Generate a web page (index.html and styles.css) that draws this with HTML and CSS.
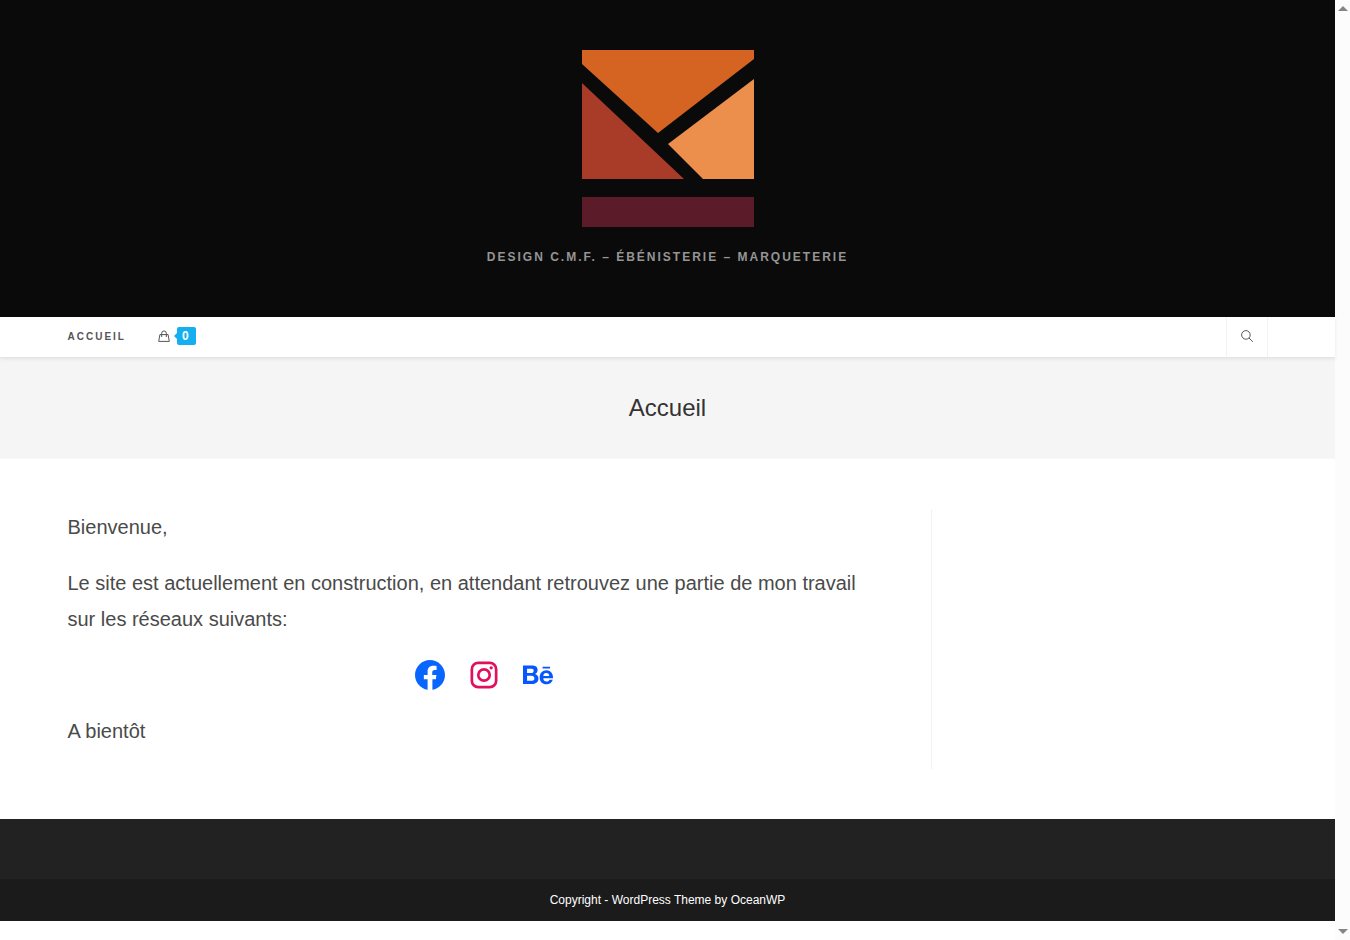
FILE: index.html
```html
<!DOCTYPE html>
<html lang="fr">

<head>
  <meta charset="UTF-8">
  <meta name="viewport" content="width=device-width, initial-scale=1.0">
  <title>Accueil</title>
  <link rel="stylesheet" href="styles.css">
</head>

<body>
  <div class="window">
    <div class="page">
      <header class="header">
        <a href="#" class="logo">
          <svg viewBox="0 0 172 177" role="img" aria-label="Logo">
            <path fill="#d56422" d="M0 0H172V9L76 83L0 14Z" />
            <path fill="#a83c29" d="M0 33L102 129H0Z" />
            <path fill="#ec8e4c" d="M172 29V129H121L86 94Z" />
            <path fill="#5c1b28" d="M0 147H172V177H0Z" />
          </svg>
        </a>
        <div class="tagline">Design C.M.F. – Ébénisterie – Marqueterie</div>
      </header>

      <nav class="nav">
        <div class="container nav-inner">
          <ul class="menu">
            <li><a href="#">Accueil</a></li>
            <li>
              <a href="#" class="cart" aria-label="Panier">
                <svg viewBox="0 0 12 12">
                  <path d="M1.900 4.600H10.100L11.300 11.400H.7ZM3.700 7V3.200A2.300 2.300 0 0 1 8.300 3.200V7" />
                </svg>
                <span class="count">0</span>
              </a>
            </li>
          </ul>
          <button type="button" class="search" aria-label="Rechercher">
            <svg viewBox="0 0 12 12">
              <circle cx="4.900" cy="4.900" r="4.300" />
              <path d="M8 8L11.800 11.800" />
            </svg>
          </button>
        </div>
      </nav>

      <div class="page-title">
        <h1>Accueil</h1>
      </div>

      <main class="container main">
        <article class="content">
          <p>Bienvenue,</p>
          <p>Le site est actuellement en construction, en attendant retrouvez une partie de mon travail sur les réseaux suivants:</p>
          <ul class="social">
            <li>
              <a href="#" class="facebook" aria-label="Facebook">
                <svg viewBox="0 0 24 24">
                  <path d="M12 2C6.5 2 2 6.5 2 12c0 5 3.7 9.1 8.4 9.9v-7H7.9V12h2.5V9.8c0-2.5 1.5-3.9 3.8-3.9 1.1 0 2.2.2 2.2.2v2.5h-1.3c-1.2 0-1.6.8-1.6 1.6V12h2.8l-.4 2.9h-2.3v7C18.3 21.1 22 17 22 12c0-5.500-4.500-10-10-10z" />
                </svg>
              </a>
            </li>
            <li>
              <a href="#" class="instagram" aria-label="Instagram">
                <svg viewBox="0 0 24 24">
                  <rect x="3.900" y="3.900" width="16.200" height="16.200" rx="4.200" />
                  <circle cx="12" cy="12" r="3.800" />
                  <circle class="dot" cx="16.800" cy="7.200" r="1.100" />
                </svg>
              </a>
            </li>
            <li>
              <a href="#" class="behance" aria-label="Behance">
                <svg viewBox="0 0 24 24">
                  <path d="M7.799,5.698c0.589,0,1.12,0.051,1.606,0.156c0.482,0.102,0.894,0.273,1.241,0.507c0.344,0.235,0.612,0.546,0.804,0.938c0.188,0.387,0.281,0.871,0.281,1.443c0,0.619-0.141,1.137-0.421,1.551c-0.284,0.413-0.7,0.751-1.255,1.014c0.756,0.218,1.317,0.601,1.689,1.146c0.374,0.549,0.557,1.205,0.557,1.975c0,0.623-0.12,1.161-0.359,1.612c-0.241,0.457-0.569,0.828-0.973,1.114c-0.408,0.288-0.876,0.5-1.399,0.637C9.052,17.931,8.514,18,7.963,18H2V5.698H7.799M7.449,10.668c0.481,0,0.878-0.114,1.192-0.345c0.311-0.228,0.463-0.603,0.463-1.119c0-0.286-0.051-0.523-0.152-0.707C8.848,8.315,8.711,8.171,8.536,8.07C8.362,7.966,8.166,7.894,7.94,7.854c-0.224-0.044-0.457-0.06-0.697-0.06H4.709v2.874H7.449zM7.6,15.905c0.267,0,0.521-0.024,0.759-0.077c0.243-0.053,0.457-0.137,0.637-0.261c0.182-0.12,0.332-0.283,0.441-0.491C9.547,14.87,9.6,14.602,9.6,14.278c0-0.633-0.18-1.084-0.533-1.357c-0.356-0.27-0.83-0.404-1.413-0.404H4.709v3.388L7.6,15.905zM16.162,15.864c0.367,0.358,0.897,0.538,1.583,0.538c0.493,0,0.92-0.125,1.277-0.374c0.354-0.248,0.571-0.514,0.654-0.79h2.155c-0.347,1.072-0.872,1.838-1.589,2.299C19.534,18,18.67,18.23,17.662,18.23c-0.701,0-1.332-0.113-1.899-0.337c-0.567-0.227-1.041-0.544-1.439-0.958c-0.389-0.415-0.689-0.907-0.904-1.484c-0.213-0.574-0.32-1.21-0.32-1.899c0-0.666,0.11-1.288,0.329-1.863c0.222-0.577,0.529-1.075,0.933-1.492c0.406-0.42,0.885-0.751,1.444-0.994c0.558-0.241,1.175-0.363,1.857-0.363c0.754,0,1.414,0.145,1.98,0.44c0.563,0.291,1.026,0.686,1.389,1.181c0.363,0.493,0.622,1.057,0.783,1.69c0.16,0.632,0.217,1.292,0.171,1.983h-6.428C15.557,14.84,15.795,15.506,16.162,15.864M18.973,11.184c-0.291-0.321-0.783-0.496-1.384-0.496c-0.39,0-0.714,0.066-0.973,0.2c-0.254,0.132-0.461,0.297-0.621,0.491c-0.157,0.197-0.265,0.405-0.328,0.628c-0.063,0.217-0.101,0.413-0.111,0.587h3.98C19.478,11.969,19.265,11.509,18.973,11.184zM15.057,7.738h4.985V6.524h-4.985V7.738z" />
                </svg>
              </a>
            </li>
          </ul>
          <p>A bientôt</p>
        </article>
      </main>

      <footer class="footer">
        <div class="footer-widgets"></div>
        <div class="copyright">Copyright - WordPress Theme by OceanWP</div>
      </footer>
    </div>

    <div class="scrollbar" aria-hidden="true">
      <svg viewBox="0 0 10 5"><path d="M0 5L5 0L10 5Z" /></svg>
      <svg viewBox="0 0 10 5"><path d="M0 0L5 5L10 0Z" /></svg>
    </div>
  </div>
</body>

</html>
```
FILE: styles.css
```css
* {
  box-sizing: border-box;
}

body {
  margin: 0;
  font-family: "Liberation Sans", Arial, sans-serif;
  color: #4a4a4a;
  background: #fff;
}

ul {
  list-style: none;
  margin: 0;
  padding: 0;
}

a {
  color: inherit;
  text-decoration: none;
}

svg {
  display: block;
}

.window {
  display: flex;
  min-height: 100vh;
}

.page {
  flex: 1;
  min-width: 0;
}

.container {
  width: 1200px;
  max-width: 90%;
  margin: 0 auto;
}

/* header */
.header {
  display: flex;
  flex-direction: column;
  align-items: center;
  gap: 20px;
  padding: 50px 20px;
  background: #0a0a0a;
}

.logo svg {
  width: 172px;
}

.tagline {
  font-size: 12px;
  font-weight: 600;
  line-height: 20px;
  letter-spacing: 2px;
  text-align: center;
  text-transform: uppercase;
  color: #959595;
}

/* navigation */
.nav {
  position: relative;
  background: #fff;
  border-bottom: 1px solid #e4e4e4;
  box-shadow: 0 1px 4px rgba(0, 0, 0, .08);
}

.nav-inner {
  display: flex;
  justify-content: space-between;
}

.menu {
  display: flex;
  gap: 32px;
}

.menu a {
  display: flex;
  align-items: center;
  height: 38px;
  font-size: 10px;
  font-weight: 600;
  letter-spacing: 2px;
  text-transform: uppercase;
  color: #555;
}

.cart svg {
  width: 12px;
  fill: none;
  stroke: #555;
}

.menu .count {
  position: relative;
  margin-left: 7px;
  padding: 0 5px;
  border-radius: 2px;
  font-size: 12px;
  line-height: 18px;
  letter-spacing: 2px;
  color: #fff;
  background: #13aff0;
}

.count::before {
  content: "";
  position: absolute;
  top: 6px;
  left: -3px;
  border: solid transparent;
  border-width: 3px 3px 3px 0;
  border-right-color: #13aff0;
}

.search {
  display: flex;
  align-items: center;
  justify-content: center;
  width: 42px;
  height: 40px;
  padding: 0 0 2px;
  border: solid #f3f3f3;
  border-width: 0 1px;
  background: none;
}

.search svg {
  width: 12px;
  fill: none;
  stroke: #555;
}

/* page title */
.page-title {
  padding: 33px 20px;
  background: #f5f5f5;
  border-bottom: 1px solid #f9f9f9;
}

.page-title h1 {
  margin: 0;
  font-size: 24px;
  font-weight: 400;
  line-height: 34px;
  text-align: center;
  color: #333;
}

/* content */
.main {
  padding: 50px 0;
}

.content {
  display: flow-root;
  width: 72%;
  padding-right: 30px;
  border-right: 1px solid #f1f1f1;
  font-size: 20px;
  line-height: 36px;
}

.content p {
  margin: 0 0 20px;
  padding-right: 20px;
}

.social {
  display: flex;
  justify-content: center;
  gap: 18px;
  margin-bottom: 20px;
}

.social svg {
  width: 36px;
  height: 36px;
  fill: currentColor;
}

.facebook {
  color: #0866ff;
}

.instagram {
  color: #e0105f;
}

.instagram svg {
  fill: none;
  stroke: currentColor;
  stroke-width: 1.8;
}

.instagram .dot {
  fill: currentColor;
  stroke: none;
}

.behance {
  color: #0757fe;
}

/* footer */
.footer-widgets {
  height: 60px;
  background: #222;
}

.copyright {
  padding: 11px 20px;
  font-size: 12px;
  line-height: 20px;
  text-align: center;
  color: #fff;
  background: #1b1b1b;
}

/* scrollbar */
.scrollbar {
  display: flex;
  flex-direction: column;
  align-items: center;
  justify-content: space-between;
  width: 15px;
  padding: 6px 0;
  background: #fcfcfc;
}

.scrollbar svg {
  width: 10px;
  fill: #858585;
}
```
